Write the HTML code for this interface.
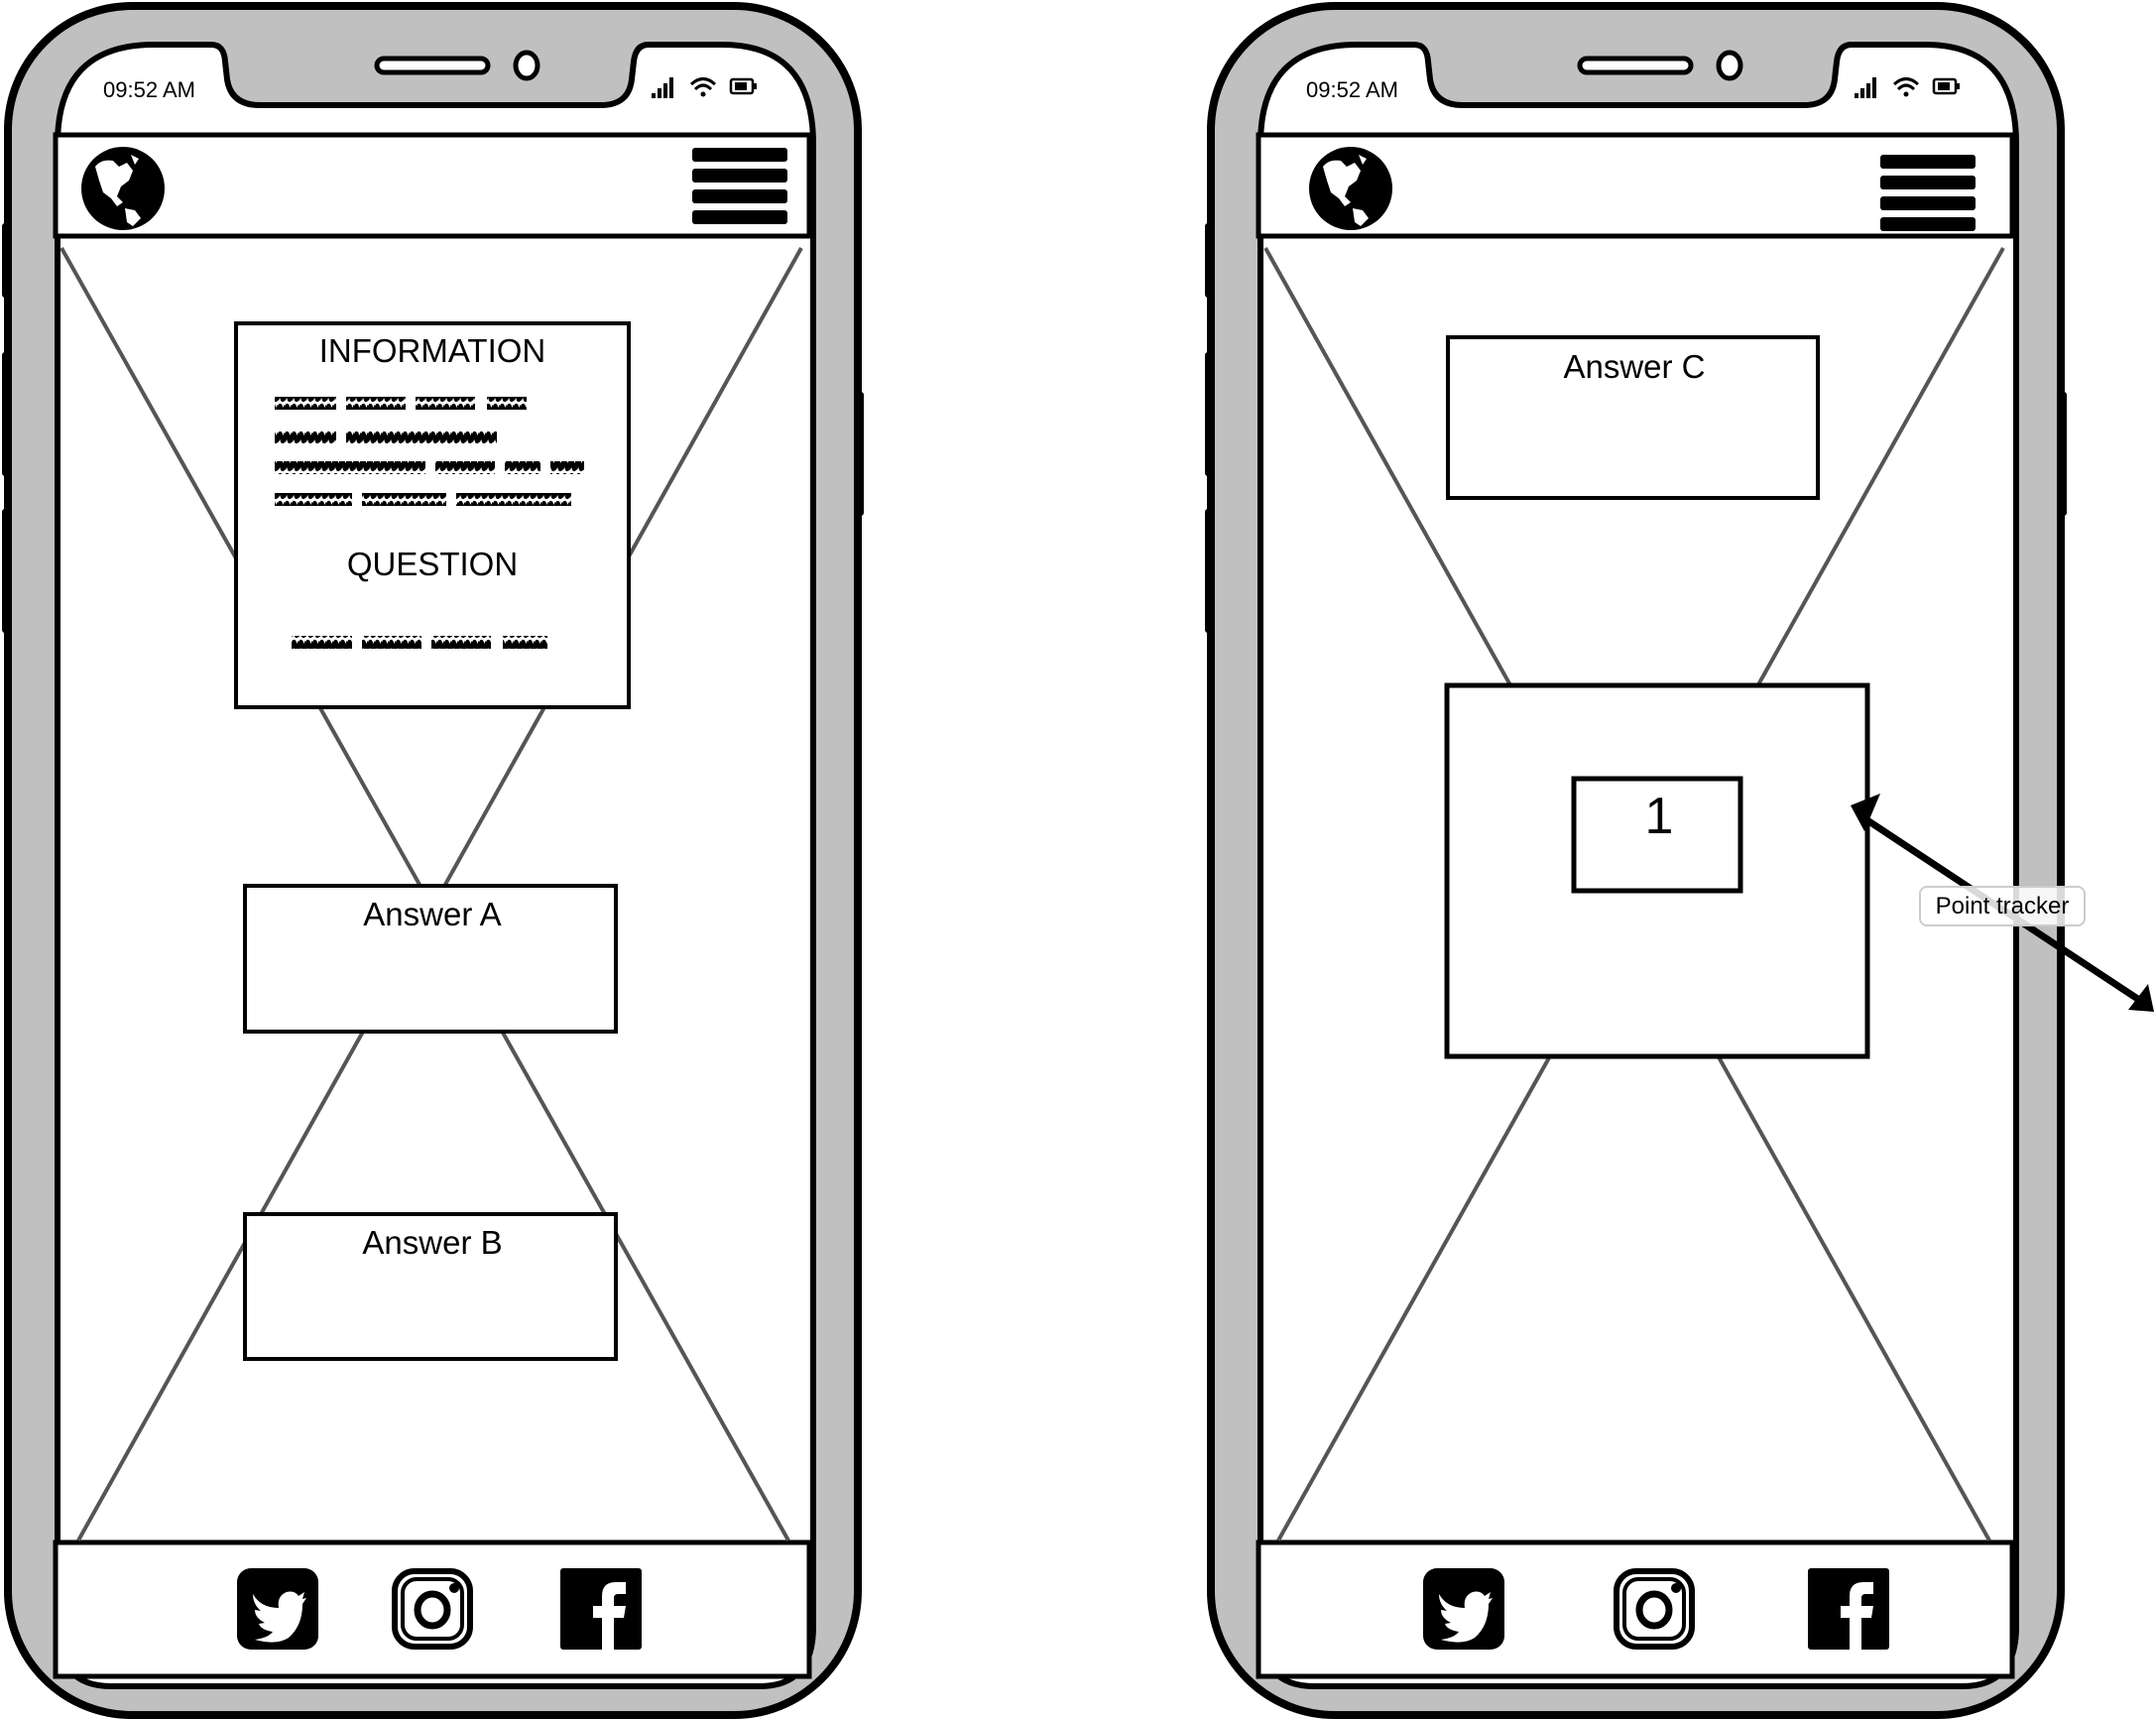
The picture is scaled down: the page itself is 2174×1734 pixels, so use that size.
<!DOCTYPE html>
<html><head><meta charset="utf-8"><style>
html,body{margin:0;padding:0;background:#fff;width:2174px;height:1734px;overflow:hidden}
svg{display:block}
text{font-family:"Liberation Sans",sans-serif;fill:#000}
</style></head><body>
<svg width="2174" height="1734" viewBox="0 0 2174 1734" xmlns="http://www.w3.org/2000/svg">
<defs>
<pattern id="zz" width="7" height="14" patternUnits="userSpaceOnUse">
<path d="M-1 11 L2.5 3 L5 11 L8.5 3" stroke="#000" stroke-width="4.2" fill="none" stroke-linejoin="round"/>
</pattern>
<g id="frame">
  <rect x="2" y="225" width="10" height="75" rx="3" fill="#000"/>
  <rect x="2" y="355" width="10" height="125" rx="3" fill="#000"/>
  <rect x="2" y="513" width="10" height="125" rx="3" fill="#000"/>
  <rect x="861" y="395" width="10" height="125" rx="3" fill="#000"/>
  <rect x="8" y="6" width="857" height="1723" rx="125" fill="#c0c0c0" stroke="#000" stroke-width="8"/>
  <path d="M58 145 Q58 45 155 45 L213 45 Q226 45 227 62 L229 80 Q233 106 262 106 L606 106 Q634 106 637 80 L639 62 Q641 45 654 45 L728 45 Q820 45 820 145 L820 1640 Q820 1700 766 1700 L112 1700 Q58 1700 58 1640 Z" fill="#fff" stroke="#000" stroke-width="6"/>
  <rect x="380" y="59" width="112" height="14" rx="7" fill="#fff" stroke="#000" stroke-width="5"/>
  <ellipse cx="531" cy="66" rx="11" ry="13" fill="#fff" stroke="#000" stroke-width="5"/>
  <text x="104" y="98" font-size="22">09:52 AM</text>
  <rect x="657" y="94" width="4" height="5" fill="#000"/>
  <rect x="663" y="89" width="4" height="10" fill="#000"/>
  <rect x="669" y="84" width="4" height="15" fill="#000"/>
  <rect x="675" y="78" width="4" height="21" fill="#000"/>
  <path d="M697 85 Q709 74 721 85" stroke="#000" stroke-width="3" fill="none"/>
  <path d="M701 90 Q709 82 717 90" stroke="#000" stroke-width="3" fill="none"/>
  <circle cx="709" cy="95" r="2.5" fill="#000"/>
  <rect x="737" y="80" width="22" height="14" rx="2" fill="#fff" stroke="#000" stroke-width="2.5"/>
  <rect x="741" y="83" width="12" height="8" fill="#000"/>
  <rect x="760" y="84" width="3" height="6" fill="#000"/>
  <rect x="56" y="136" width="760" height="102" fill="#fff" stroke="#000" stroke-width="5"/>
  <rect x="56" y="1555" width="760" height="135" fill="#fff" stroke="#000" stroke-width="5"/>
</g>
<g id="globe">
  <ellipse cx="0" cy="0" rx="42" ry="42" fill="#000"/>
  <path d="M-28 -22 Q-22 -30 -10 -28 L-4 -22 L4 -26 L10 -18 L6 -8 L-2 -2 L-6 8 L0 14 L-6 18 L-12 10 L-20 4 L-24 -8 Z" fill="#fff"/>
  <path d="M2 20 L12 22 L18 30 L10 38 L4 34 Z" fill="#fff"/>
  <path d="M8 -34 L16 -30 L12 -24 Z" fill="#fff"/>
</g>
<g id="burger">
  <rect x="0" y="0" width="96" height="14" rx="3" fill="#000"/>
  <rect x="0" y="21" width="96" height="14" rx="3" fill="#000"/>
  <rect x="0" y="42" width="96" height="14" rx="3" fill="#000"/>
  <rect x="0" y="63" width="96" height="14" rx="3" fill="#000"/>
</g>
<g id="tw">
  <rect x="0" y="0" width="82" height="82" rx="14" fill="#000"/>
  <path d="M16 26 Q24 40 42 40 Q40 28 50 24 Q58 22 62 28 L68 24 L66 31 L70 30 L66 36 Q66 58 52 70 Q40 78 18 72 Q32 70 36 64 Q24 62 22 56 L28 55 Q18 50 18 42 L24 43 Q16 36 16 26 Z" fill="#fff"/>
</g>
<g id="ig">
  <rect x="3" y="3" width="76" height="76" rx="20" fill="none" stroke="#000" stroke-width="6"/>
  <rect x="11" y="11" width="60" height="60" rx="14" fill="none" stroke="#000" stroke-width="4"/>
  <ellipse cx="41" cy="42" rx="15" ry="16" fill="none" stroke="#000" stroke-width="7"/>
  <circle cx="63" cy="20" r="5" fill="#000"/>
</g>
<g id="fb">
  <rect x="0" y="0" width="82" height="82" rx="3" fill="#000"/>
  <path d="M42 82 L42 50 L33 50 L33 38 L42 38 L42 28 Q42 14 56 14 L66 14 L66 26 L58 26 Q54 26 54 30 L54 38 L66 38 L64 50 L54 50 L54 82 Z" fill="#fff"/>
</g>
</defs>

<!-- LEFT PHONE -->
<use href="#frame"/>
<use href="#globe" transform="translate(124,190)"/>
<use href="#burger" transform="translate(698,149)"/>
<line x1="62" y1="250" x2="795" y2="1553" stroke="#555" stroke-width="4"/>
<line x1="808" y1="250" x2="79" y2="1553" stroke="#555" stroke-width="4"/>

<rect x="238" y="326" width="396" height="387" fill="#fff" stroke="#000" stroke-width="4"/>
<text x="436" y="365" font-size="33" text-anchor="middle">INFORMATION</text>
<rect x="277" y="400" width="62" height="13" fill="url(#zz)"/>
<rect x="349" y="400" width="60" height="13" fill="url(#zz)"/>
<rect x="419" y="400" width="60" height="13" fill="url(#zz)"/>
<rect x="491" y="400" width="40" height="13" fill="url(#zz)"/>
<rect x="277" y="434" width="62" height="13" fill="url(#zz)"/>
<rect x="349" y="434" width="152" height="13" fill="url(#zz)"/>
<rect x="277" y="465" width="152" height="13" fill="url(#zz)"/>
<rect x="439" y="465" width="60" height="13" fill="url(#zz)"/>
<rect x="509" y="465" width="36" height="13" fill="url(#zz)"/>
<rect x="555" y="465" width="34" height="13" fill="url(#zz)"/>
<rect x="277" y="497" width="78" height="13" fill="url(#zz)"/>
<rect x="365" y="497" width="85" height="13" fill="url(#zz)"/>
<rect x="460" y="497" width="116" height="13" fill="url(#zz)"/>
<text x="436" y="580" font-size="33" text-anchor="middle">QUESTION</text>
<rect x="294" y="641" width="61" height="13" fill="url(#zz)"/>
<rect x="365" y="641" width="60" height="13" fill="url(#zz)"/>
<rect x="435" y="641" width="60" height="13" fill="url(#zz)"/>
<rect x="507" y="641" width="45" height="13" fill="url(#zz)"/>

<rect x="247" y="893" width="374" height="147" fill="#fff" stroke="#000" stroke-width="4"/>
<text x="436" y="933" font-size="33" text-anchor="middle">Answer A</text>
<rect x="247" y="1224" width="374" height="146" fill="#fff" stroke="#000" stroke-width="4"/>
<text x="436" y="1264" font-size="33" text-anchor="middle">Answer B</text>

<use href="#tw" transform="translate(239,1581)"/>
<use href="#ig" transform="translate(395,1581)"/>
<use href="#fb" transform="translate(565,1581)"/>

<!-- RIGHT PHONE -->
<use href="#frame" transform="translate(1213,0)"/>
<use href="#globe" transform="translate(1362,190)"/>
<use href="#burger" transform="translate(1896,156)"/>
<line x1="1276" y1="250" x2="2006" y2="1553" stroke="#555" stroke-width="4"/>
<line x1="2020" y1="250" x2="1289" y2="1553" stroke="#555" stroke-width="4"/>

<rect x="1460" y="340" width="373" height="162" fill="#fff" stroke="#000" stroke-width="4"/>
<text x="1648" y="381" font-size="33" text-anchor="middle">Answer C</text>

<rect x="1459" y="691" width="424" height="374" fill="#fff" stroke="#000" stroke-width="5"/>
<rect x="1587" y="785" width="168" height="113" fill="#fff" stroke="#000" stroke-width="5"/>
<text x="1673" y="840" font-size="52" text-anchor="middle">1</text>

<line x1="1880" y1="825" x2="2160" y2="1010" stroke="#000" stroke-width="7"/>
<path d="M1866 812 L1896 800 L1880 838 Z" fill="#000"/>
<path d="M2172 1020 L2146 1018 L2166 992 Z" fill="#000"/>
<rect x="1936" y="894" width="166" height="39" rx="7" fill="#fff" fill-opacity="0.85" stroke="#ccc" stroke-width="2"/>
<text x="2019" y="921" font-size="24" text-anchor="middle">Point tracker</text>

<use href="#tw" transform="translate(1435,1581)"/>
<use href="#ig" transform="translate(1627,1581)"/>
<use href="#fb" transform="translate(1823,1581)"/>
</svg>
</body></html>
